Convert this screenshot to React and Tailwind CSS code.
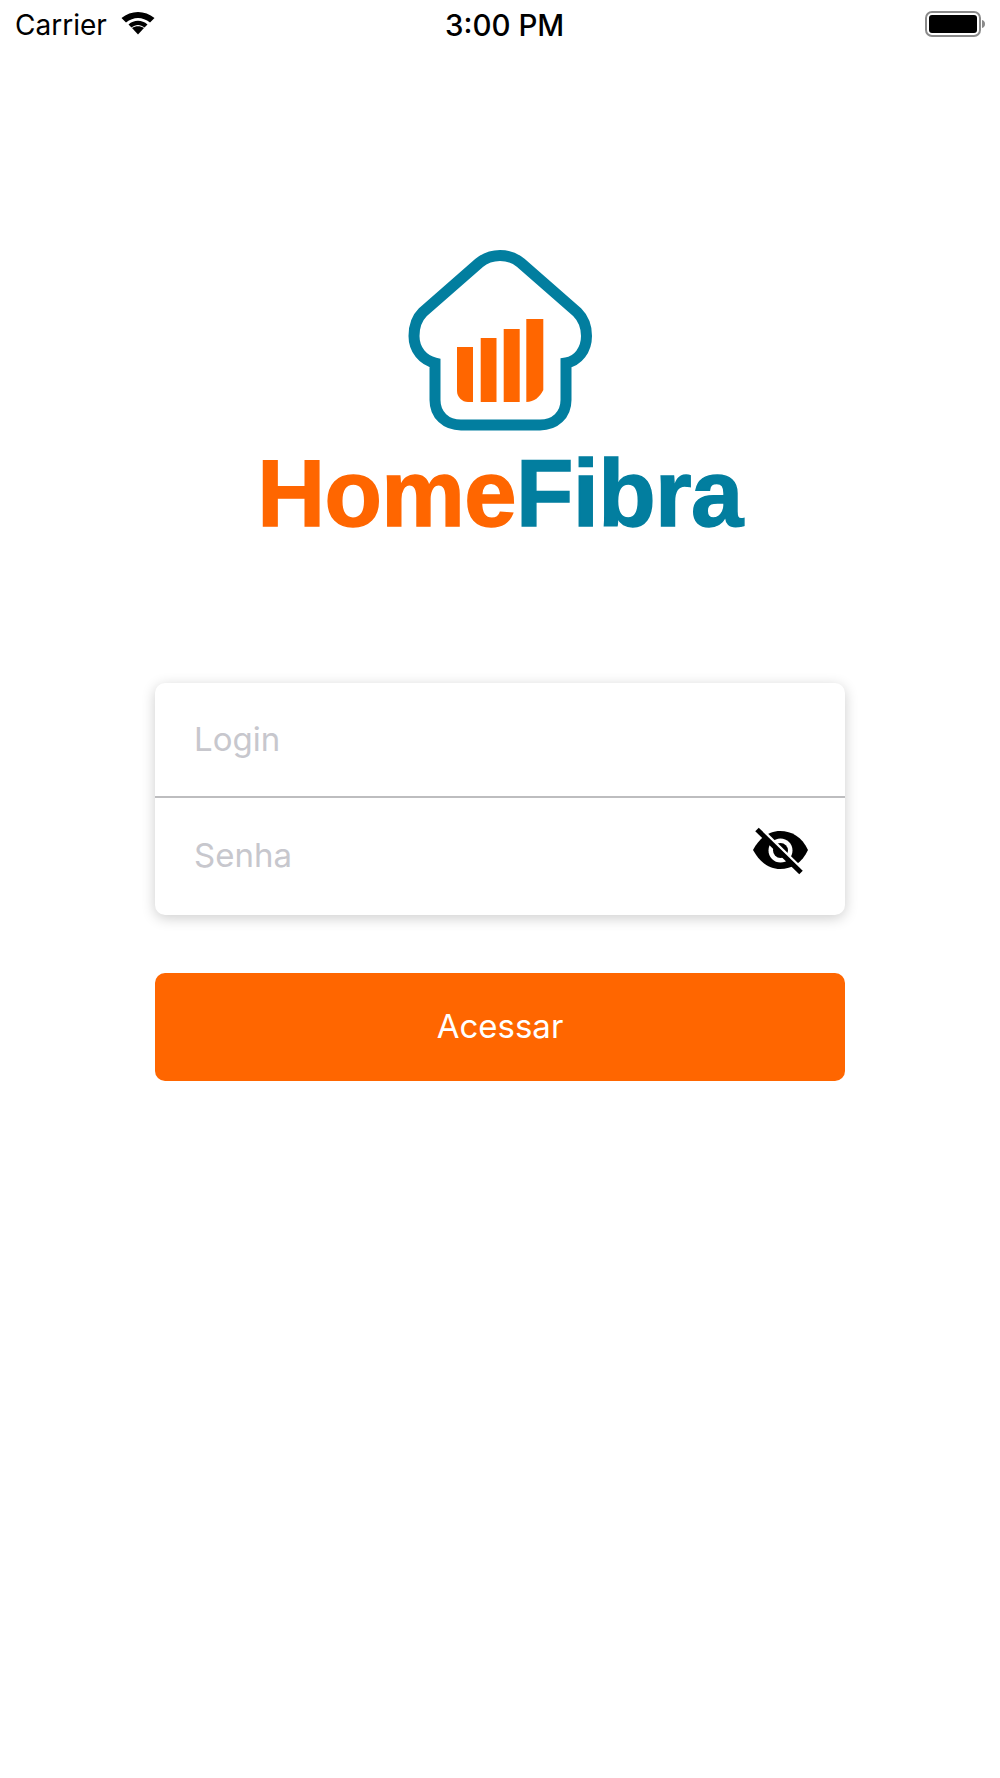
import React from "react";

const font = { fontFamily: "Inter, sans-serif" };

const StatusBar = () => (
  <div className="relative flex h-[53px] items-start justify-between pl-[15px] pr-[15px] text-black">
    <div className="flex items-center gap-[13px] pt-[11px]">
      <span className="font-['Inter'] text-[28px] leading-[28px]">Carrier</span>
      <svg width="36" height="27" viewBox="0 0 36 26" className="-mt-[5px]">
        <path d="M18 25 L12 18.5 C15.5 16 20.5 16 24 18.5 Z" fill="#000" />
        <path d="M8.5 15 C14 10 22 10 27.5 15 L24.5 18 C20.5 14.6 15.5 14.6 11.5 18 Z" fill="#000" />
        <path d="M1.5 8.5 C11 0.5 25 0.5 34.5 8.5 L30 13 C22.5 7 13.5 7 6 13 Z" fill="#000" />
      </svg>
    </div>
    <span className="absolute left-[445px] top-[10px] font-['Inter'] text-[29.5px] font-medium leading-[30px]">
      3:00 PM
    </span>
    <svg width="60" height="28" viewBox="0 0 60 28" className="mt-[10px]">
      <rect x="1" y="2" width="54" height="24" rx="6" fill="none" stroke="#8a8a8a" strokeWidth="2" />
      <rect x="4" y="5" width="48" height="18" rx="3" fill="#000" />
      <path d="M57 10 C59 10.5 60 12 60 14 C60 16 59 17.5 57 18 Z" fill="#8a8a8a" />
    </svg>
  </div>
);

const Logo = () => (
  <div className="flex flex-col items-center">
    <svg width="184" height="181" viewBox="0 0 184 181" fill="none">
      <path
        d="M92 5.5 C101 5.5 107 8 113 13 L169 62 C175 68 178.5 76 178.5 86 C178.5 100 170 111 158 113 L158 150 C158 165 147 175 132 175 L53 175 C38 175 27 165 27 150 L27 113 C15 110 6 100 6 86 C6 76 9 68 15 62 L71 13 C77 8 83 5.5 92 5.5 Z"
        stroke="#027e9f"
        strokeWidth="11"
      />
      <path d="M49 97 H65 V152 H60 C54 152 49 147 49 141 Z" fill="#ff6600" />
      <rect x="72.7" y="88" width="15.8" height="64" fill="#ff6600" />
      <rect x="95.7" y="79" width="16" height="73" fill="#ff6600" />
      <path d="M118.3 69 H135.3 V140 C132 147 126 152 118.3 152 Z" fill="#ff6600" />
    </svg>
    <div className="mt-[15px] font-['Liberation_Sans'] text-[94px] font-bold leading-[96px] tracking-[-0.6px]">
      <span className="text-[#ff6600] [-webkit-text-stroke:1.5px_#ff6600]">Home</span>
      <span className="text-[#027e9f] [-webkit-text-stroke:1.5px_#027e9f]">Fibra</span>
    </div>
  </div>
);

const EyeOff = () => (
  <svg width="60" height="48" viewBox="0 0 60 48" className="shrink-0">
    <path d="M1 23 C8 10 18 4 28 4 C40 4 50 10 56 23 C50 36 40 42 28 42 C18 42 8 36 1 23 Z" fill="#000" />
    <circle cx="28.5" cy="23.5" r="12" fill="#fff" />
    <circle cx="28.5" cy="23.5" r="7.5" fill="#000" />
    <path d="M8 1 L52 44" stroke="#fff" strokeWidth="3" />
    <path d="M5 2.5 L49 45.5" stroke="#000" strokeWidth="5" />
  </svg>
);

export default function App() {
  return (
    <div className="min-h-[1778px] bg-white" style={font}>
      <StatusBar />

      <div className="mt-[197px]">
        <Logo />
      </div>

      <div className="mx-[155px] mt-[141px]">
        {/* Form card */}
        <div className="rounded-[10px] bg-white shadow-[0_3px_14px_rgba(0,0,0,0.2)]">
          <div className="flex h-[113px] items-center pl-[39px] font-['Inter'] text-[33px] text-[#c7c7cd]">
            <span>Login</span>
          </div>
          <div className="h-[2px] bg-[#bdbdbf]" />
          <div className="flex h-[117px] items-center justify-between pl-[39px] pr-[33px] font-['Inter'] text-[33px] text-[#c7c7cd]">
            <span className="mb-[1px]">Senha</span>
            <div className="mb-[11px]">
              <EyeOff />
            </div>
          </div>
        </div>

        <button className="mt-[58px] flex h-[108px] w-full items-center justify-center rounded-[10px] bg-[#ff6600] font-['Inter'] text-[33px] text-white">
          Acessar
        </button>
      </div>
    </div>
  );
}
